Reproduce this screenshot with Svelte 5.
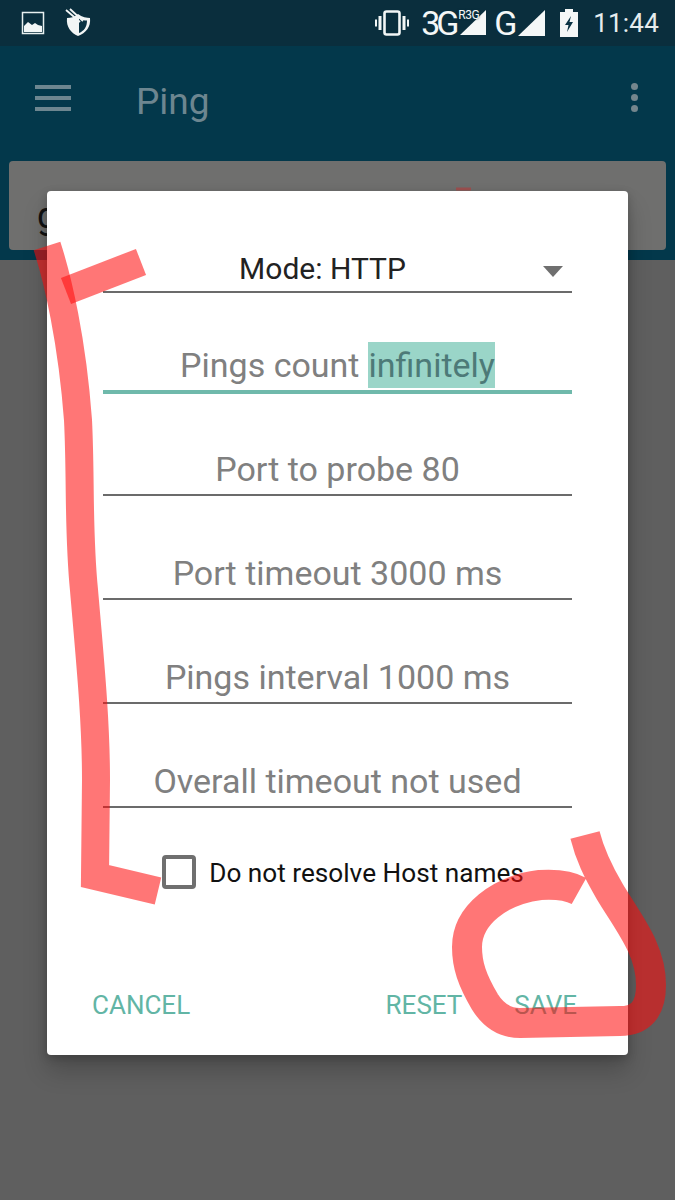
<script>
  const fields = [
    { label: "Pings count", value: "infinitely", active: true },
    { label: "Port to probe 80" },
    { label: "Port timeout 3000 ms" },
    { label: "Pings interval 1000 ms" },
    { label: "Overall timeout not used" }
  ];
</script>

<div class="screen">
  <div class="status">
    <div class="status-left">
      <svg width="24" height="24" viewBox="0 0 24 24">
        <rect x="1.5" y="1.5" width="21" height="21" fill="none" stroke="#e8f0f0" stroke-width="1.5" />
        <path d="M3 21V15L7 11L11 14L14 12L17 14L21 15V21Z" fill="#f2f6f6" />
      </svg>
      <svg width="30" height="30" viewBox="0 0 30 30">
        <path d="M4 10C8 10 11 9 15 6C19 9 24 10 27 10C28 19 23 25 15 28C8 25 3 19 4 10Z" fill="#f2f6f6" />
        <path d="M16 10C19 12 21 12.500 24 12.500C24 19 21 23 16 25Z" fill="#0a3344" />
        <path d="M3 2L17 14M7 1L20 13" stroke="#f2f6f6" stroke-width="1.800" />
      </svg>
    </div>
    <div class="status-right">
      <svg width="34" height="26" viewBox="0 0 34 26">
        <rect x="9.500" y="1.500" width="15" height="23" rx="2" fill="none" stroke="#f2f6f6" stroke-width="2.600" />
        <path d="M5 6V20M29 6V20" stroke="#f2f6f6" stroke-width="3" />
        <path d="M1 9.500V16.500M33 9.500V16.500" stroke="#f2f6f6" stroke-width="2" />
      </svg>
      <span class="net">3G</span>
      <span class="signal">
        <svg width="26" height="26" viewBox="0 0 26 26"><path d="M26 0V25H0Z" fill="#f4f7f7" /></svg>
        <small>R3G</small>
      </span>
      <span class="net second">G</span>
      <svg class="tri" width="27" height="26" viewBox="0 0 27 26"><path d="M27 0V26H0Z" fill="#f4f7f7" /></svg>
      <svg class="battery" width="18" height="28" viewBox="0 0 18 28">
        <path d="M5 0H13V3H18V28H0V3H5Z" fill="#f4f7f7" />
        <path d="M11 7L5 16H8.500L7 23L13 13H9.500Z" fill="#0a3344" />
      </svg>
      <span class="time">11:44</span>
    </div>
  </div>

  <div class="toolbar">
    <div class="toolbar-row">
      <div class="hamburger"><i></i><i></i><i></i></div>
      <span class="title">Ping</span>
      <div class="overflow"><i></i><i></i><i></i></div>
    </div>
    <div class="host-card"><span>g</span></div>
  </div>

  <div class="dialog">
    <div class="spinner">
      <span>Mode: HTTP</span>
      <i class="caret"></i>
    </div>

    {#each fields as field}
      <div class="field" class:active={field.active}>
        <span>{field.label}</span>
        {#if field.value}
          <mark>{field.value}</mark>
        {/if}
      </div>
    {/each}

    <label class="check">
      <span class="box"></span>
      <span class="check-text">Do not resolve Host names</span>
    </label>

    <div class="actions">
      <span>CANCEL</span>
      <div class="actions-right">
        <span>RESET</span>
        <span>SAVE</span>
      </div>
    </div>
  </div>

  <!-- red marker scribbles drawn over the screenshot -->
  <svg class="scribble" width="675" height="1200" viewBox="0 0 675 1200">
    <g fill="none" stroke="#ff0a0a" stroke-opacity="0.56" stroke-width="28">
      <path d="M47 246C58 280 72 340 78 420C81 480 78 530 84 590C90 660 96 720 96 780L95 876L158 891" />
      <path d="M66 291L141 262" />
      <path d="M585 835C590 855 597 870 610 892C630 925 651 950 651 985C651 1010 640 1021 620 1021L520 1023C500 1023 490 1010 485 1002C472 980 467 965 467 947C467 915 500 890 540 885C555 884 570 886 579 891" stroke-width="30" />
      <path d="M456 189L471 189" stroke-width="3" stroke-opacity="0.3" />
    </g>
  </svg>
</div>

<style>
  :global(body) {
    margin: 0;
  }

  .screen {
    position: relative;
    width: 675px;
    height: 1200px;
    overflow: hidden;
    background: #5f5f5f;
    font-family: Roboto, "Liberation Sans", sans-serif;
  }

  .status {
    height: 46px;
    padding: 0 16px 0 21px;
    background: #0a2e3d;
    display: flex;
    align-items: center;
    justify-content: space-between;
    box-sizing: border-box;
  }

  .status-left {
    display: flex;
    align-items: center;
    gap: 18px;
  }

  .status-right {
    display: flex;
    align-items: center;
  }

  .net {
    font-size: 34px;
    line-height: 46px;
    color: #f4f7f7;
    margin-left: 12px;
    width: 39px;
    letter-spacing: -4px;
  }

  .net.second {
    margin-left: 8px;
    width: 24px;
  }

  .signal {
    position: relative;
    display: flex;
  }

  .signal small {
    position: absolute;
    left: -2px;
    top: -2px;
    font-size: 12px;
    letter-spacing: -0.5px;
    color: #f4f7f7;
    text-shadow: 0 0 2px #0a2e3d;
  }

  .battery {
    margin-left: 15px;
  }

  .time {
    font-size: 26px;
    color: #e6ecee;
    margin-left: 15px;
    letter-spacing: 0.2px;
  }

  .toolbar {
    height: 214px;
    background: #03384b;
    padding: 0 9px;
    box-sizing: border-box;
  }

  .toolbar-row {
    height: 115px;
    display: flex;
    align-items: center;
    padding: 0 28px 0 26px;
    box-sizing: border-box;
  }

  .hamburger {
    width: 36px;
    display: flex;
    flex-direction: column;
    gap: 7px;
    margin-bottom: 12px;
  }

  .hamburger i {
    height: 4px;
    background: #6d8690;
  }

  .title {
    font-size: 37px;
    color: #6d8690;
    margin-left: 65px;
    margin-bottom: 4px;
    flex: 1;
  }

  .overflow {
    display: flex;
    flex-direction: column;
    gap: 4px;
    margin-bottom: 12px;
  }

  .overflow i {
    width: 7px;
    height: 7px;
    border-radius: 50%;
    background: #74868d;
  }

  .host-card {
    height: 89px;
    background: #6f6f6e;
    border-radius: 4px;
    padding: 34px 0 0 28px;
    box-sizing: border-box;
    font-size: 36px;
    color: #111;
  }

  .dialog {
    position: absolute;
    left: 47px;
    top: 191px;
    width: 581px;
    height: 864px;
    padding: 48px 56px 0;
    box-sizing: border-box;
    background: #fff;
    border-radius: 4px;
    box-shadow: 0 16px 24px rgba(0, 0, 0, 0.2), 0 3px 10px rgba(0, 0, 0, 0.2);
    display: flex;
    flex-direction: column;
  }

  .spinner {
    height: 54px;
    padding: 6px 30px 0 0;
    border-bottom: 2px solid #6b6b6b;
    display: flex;
    align-items: center;
    justify-content: center;
    position: relative;
    font-size: 30px;
    color: #222;
    box-sizing: border-box;
    flex: none;
  }

  .caret {
    position: absolute;
    right: 9px;
    top: 27px;
    border: 10px solid transparent;
    border-top: 11px solid #6f6f6f;
    border-bottom: 0;
  }

  .field {
    height: 52px;
    margin-top: 52px;
    border-bottom: 2px solid #6b6b6b;
    box-sizing: border-box;
    display: flex;
    align-items: center;
    justify-content: center;
    gap: 9px;
    font-size: 34px;
    color: #808080;
    flex: none;
  }

  .field.active {
    margin-top: 46px;
    height: 55px;
    border-bottom: 4px solid #6fb9ab;
  }

  .field.active + .field {
    margin-top: 50px;
  }

  .field mark {
    background: #9ad5c8;
    color: #4d7a78;
    line-height: 46px;
    display: inline-block;
  }

  .check {
    display: flex;
    align-items: center;
    justify-content: center;
    gap: 13px;
    margin-top: 47px;
    margin-left: 11px;
    font-size: 26.200px;
    color: #111;
  }

  .check-text {
    padding-top: 2px;
  }

  .box {
    width: 34px;
    height: 34px;
    border: 4px solid #6f6f6f;
    border-radius: 4px;
    box-sizing: border-box;
  }

  .actions {
    margin: auto -5px 35px -11px;
    display: flex;
    justify-content: space-between;
    font-size: 26px;
    color: #62b5a5;
  }

  .actions-right {
    display: flex;
    gap: 52px;
  }

  .scribble {
    position: absolute;
    left: 0;
    top: 0;
    pointer-events: none;
  }
</style>
